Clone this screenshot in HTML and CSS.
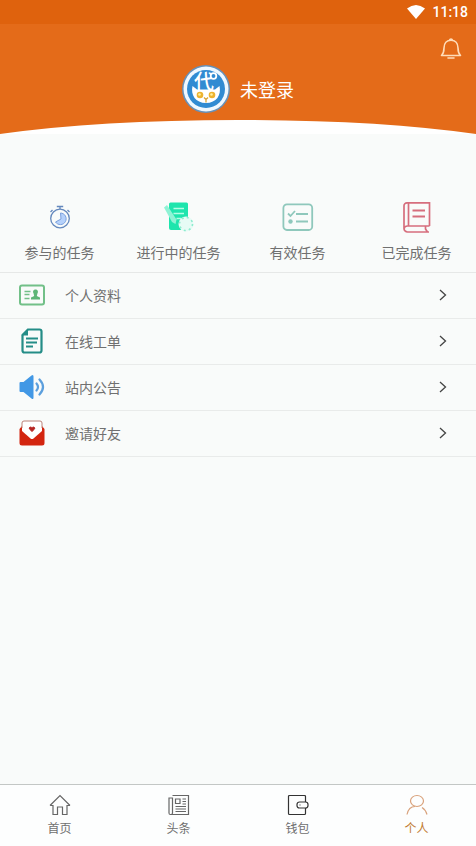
FILE: index.html
```html
<!DOCTYPE html>
<html lang="zh-CN">
<head>
<meta charset="utf-8">
<meta name="viewport" content="width=device-width, initial-scale=1">
<title>个人</title>
<link rel="stylesheet" href="styles.css">
</head>
<body>
<div class="status">
  <svg class="wifi" viewBox="0 0 18 14" aria-hidden="true"><path d="M0 3.5Q9-3.5 18 3.5L9 14Z" fill="#fff"/></svg>
  <span>11:18</span>
</div>
<header class="header">
  <button class="bell" type="button" aria-label="消息">
    <svg viewBox="0 0 24 24" fill="none" stroke="#ffdcb8" stroke-width="1.600" stroke-linejoin="round" stroke-linecap="round"><path d="M10.400 3.200a1.700 1.700 0 0 1 3.200 0M2.500 18.500h19M2.500 18.500C4.500 16.500 5 14.500 5 11c0-4.800 2.800-7.800 7-7.800s7 3 7 7.800c0 3.500.5 5.500 2.500 7.500M9 21h6"/></svg>
  </button>
  <a class="profile" href="#login">
    <svg class="avatar" viewBox="0 0 48 48" aria-hidden="true">
      <circle cx="24" cy="24" r="24" fill="#6791b8"/>
      <circle cx="24" cy="24" r="22.500" fill="#eff8ff"/>
      <circle cx="24" cy="24" r="19" fill="#318bd2"/>
      <path d="M10.500 21l4.500 3.500h18l4.500-3.500c2 9-3 17-13.500 17S8.500 30 10.500 21Z" fill="#fff"/>
      <text class="mark" x="22" y="24" text-anchor="middle">代</text>
      <circle cx="31.500" cy="11" r="2.800" fill="#318bd2" stroke="#fff" stroke-width="1.800"/>
      <circle cx="18" cy="30" r="3.300" fill="#edb32f"/><circle cx="30" cy="30" r="3.300" fill="#edb32f"/>
      <circle cx="17.500" cy="29.500" r="1.300" fill="#fff0a0"/><circle cx="29.500" cy="29.500" r="1.300" fill="#fff0a0"/>
      <path d="M22 32.500l2 2 2-2M24 34.500v3" fill="none" stroke="#dba536" stroke-width="1.300"/>
    </svg>
    <span>未登录</span>
  </a>
  <svg class="curve" viewBox="0 0 476 14" preserveAspectRatio="none" aria-hidden="true"><path d="M0 14Q100 0 238 0T476 14Z" fill="#fff"/></svg>
</header>
<main class="main">
  <nav class="stats" aria-label="任务">
    <a href="#joined">
      <svg viewBox="0 0 32 32" fill="none" stroke="#6488bd" stroke-width="1.300"><circle cx="16" cy="17.500" r="9.300"/><path d="M16 8V5.500M12.800 5.500h6.400"/><path d="M6.500 11l2-2M25.500 11l-2-2"/><path d="M16.500 12a5.800 5.800 0 1 1-5 9L17 18Z" fill="#b5d1fb" stroke="#7ba0dd" stroke-width="1"/></svg>
      <span>参与的任务</span>
    </a>
    <a href="#running">
      <svg viewBox="0 0 32 32"><path d="M6 3Q6 1.500 7.500 1.500H23.500Q25 1.500 25 3V29H8Q6 29 6 27Z" fill="#1ee5ad"/><path d="M1 6.500L4 4l9.500 14.500-1 4.500-3.500-2Z" fill="#8ff3d5"/><path d="M10.500 7.500h10.500M10.500 12.500h10.500M13.500 17.500h5" stroke="#b4fde5" stroke-width="1.500"/><circle cx="23" cy="23" r="7.500" fill="#e6fbf5"/><circle cx="23" cy="23" r="6.500" fill="none" stroke="#8eeccf" stroke-width="1.600" stroke-dasharray="2 3.100"/></svg>
      <span>进行中的任务</span>
    </a>
    <a href="#valid">
      <svg viewBox="0 0 32 32" fill="none" stroke="#8fc8bc" stroke-width="1.800"><rect x="1.400" y="3.400" width="28.800" height="25.600" rx="3.500"/><path d="M6 12.500l2.500 2.500 4.500-5M14 13h12M14 20.500h12"/><circle cx="8.500" cy="20.500" r="2.200" fill="#8fc8bc" stroke="none"/></svg>
      <span>有效任务</span>
    </a>
    <a href="#done">
      <svg viewBox="0 0 32 32" fill="none" stroke="#d66e7d" stroke-width="1.700"><path d="M28.500 25V1.800H6A3 3 0 0 0 3 5v22.500a3.500 3.500 0 0 0 3.500 3.500h21.500M28.500 25H6.500a3.500 3.500 0 0 0-3.500 3M7.500 2v23M24.500 25v3l2 3"/><path d="M11.500 9.500h12.500M11.500 15.500h12.500" stroke-width="1.900"/></svg>
      <span>已完成任务</span>
    </a>
  </nav>
  <ul class="menu">
    <li><a href="#profile">
      <svg class="icon" viewBox="0 0 26 26"><rect x="1" y="3.500" width="24" height="19" rx="2" fill="none" stroke="#72c088" stroke-width="2"/><path d="M5.500 9.500h6M5.500 12.500h5M5.500 16.500h5" stroke="#72c088" stroke-width="1.600"/><path d="M16.500 7.500a2.300 2.300 0 0 1 2 3.700L17.800 14l3.200 1.500v2h-9v-2l3.200-1.500-.7-2.800A2.300 2.300 0 0 1 16.500 7.500Z" fill="#5fb677"/></svg>
      <span>个人资料</span>
      <svg class="arrow" viewBox="0 0 12 12"><path d="M3 1l5.500 5L3 11"/></svg></a></li>
    <li><a href="#tickets">
      <svg class="icon" viewBox="0 0 26 26"><path d="M9 1.500h11.500a2 2 0 0 1 2 2v19a2 2 0 0 1-2 2h-15a2 2 0 0 1-2-2V7Z" fill="none" stroke="#248d87" stroke-width="2.200" stroke-linejoin="round"/><path d="M2.500 7.500L9 .5v7Z" fill="#248d87"/><path d="M7 10.500h12M7 14.500h11M7 18.500h7" stroke="#248d87" stroke-width="1.900"/></svg>
      <span>在线工单</span>
      <svg class="arrow" viewBox="0 0 12 12"><path d="M3 1l5.500 5L3 11"/></svg></a></li>
    <li><a href="#notices">
      <svg class="icon" viewBox="0 0 26 26"><path d="M.5 9q0-1 1-1h3L12.500 1.500Q14.500 0 14.500 2.500v21q0 2.500-2 1L4.500 18h-3q-1 0-1-1Z" fill="#4298e5"/><path d="M17.500 9.500q3 3.500 0 7M20.500 5.500q7 7.500 0 15" fill="none" stroke="#5c9fdd" stroke-width="2.200" stroke-linecap="round"/></svg>
      <span>站内公告</span>
      <svg class="arrow" viewBox="0 0 12 12"><path d="M3 1l5.500 5L3 11"/></svg></a></li>
    <li><a href="#invite">
      <svg class="icon" viewBox="0 0 26 26"><path d="M.5 9L3 6l10 6 10-6 2.500 3v14q0 2.500-2.500 2.500H3Q.5 25.500.5 23Z" fill="#d3250f"/><path d="M3 11V3Q3 1 5 1h16q2 0 2 2v8l-8.500 7.500q-1.500 1-3 0Z" fill="#fff"/><path d="M3 8V3Q3 1 5 1h16q2 0 2 2v5" fill="none" stroke="#bb8278"/><path d="M13 11.500l-2.500-2.400c-1-2 1.500-2.700 2.500-1.200 1-1.500 3.500-.8 2.500 1.200Z" fill="#b72522" stroke="#b72522"/></svg>
      <span>邀请好友</span>
      <svg class="arrow" viewBox="0 0 12 12"><path d="M3 1l5.500 5L3 11"/></svg></a></li>
  </ul>
</main>
<nav class="tabs" aria-label="主导航">
  <a href="#home">
    <svg viewBox="0 0 22 22"><path d="M1 11.500L11 1.500l10 10M1 11.500h3V20.500h4.500V13h5v7.500H18v-9h3"/></svg>
    <span>首页</span></a>
  <a href="#news">
    <svg viewBox="0 0 22 22"><path d="M4.500 1.500h16v19h-18q-1.500 0-1.500-1.500V4h3.500v15q0 1.500-1.500 1.500"/><path d="M7.500 5h4.500v4.500H7.500ZM14.500 5h3.500M14.500 7.500h3.500M14.500 10h3.500M7.500 12.500h10.500M7.500 15h10.500M7.500 17.500h10.500"/></svg>
    <span>头条</span></a>
  <a href="#wallet">
    <svg class="dark" viewBox="0 0 22 22"><path d="M18.500 8V2.500q0-1-1-1H2.500q-1 0-1 1v17q0 1 1 1h15q1 0 1-1V14"/><rect x="10" y="8" width="11" height="6" rx="2.500"/><path d="M12.500 11h1"/></svg>
    <span>钱包</span></a>
  <a class="active" href="#me" aria-current="page">
    <svg viewBox="0 0 22 22"><ellipse cx="11" cy="7" rx="6.500" ry="5.500"/><path d="M1 20.500c1-5 4-8 8-8M16 13.500c2.500 1.500 4 3.500 5 7"/></svg>
    <span>个人</span></a>
</nav>
</body>
</html>
```

FILE: styles.css
```css
* {
  box-sizing: border-box;
}

body {
  display: flex;
  flex-direction: column;
  min-height: 100vh;
  margin: 0;
  background: #f9fbfa;
  color: #707070;
  font-family: "Noto Sans CJK SC", sans-serif;
  font-size: 14px;
  line-height: 18px;
}

a {
  color: inherit;
  text-decoration: none;
}

svg {
  display: block;
}

.status {
  display: flex;
  align-items: center;
  justify-content: flex-end;
  gap: 7px;
  height: 24px;
  padding: 0 8px;
  background: #df620d;
  color: #fff;
  font-family: Roboto, sans-serif;
  font-size: 14px;
  font-weight: 500;
}

.wifi {
  width: 18px;
  height: 14px;
}

.header {
  display: flex;
  flex-direction: column;
  align-items: center;
  padding-top: 13px;
  background: #e46b19;
}

.bell {
  align-self: flex-end;
  width: 24px;
  height: 24px;
  margin: 0 13px 4px;
  padding: 0;
  border: 0;
  background: none;
}

.profile {
  display: flex;
  align-items: center;
  gap: 10px;
  margin-bottom: 7px;
  color: #fff;
  font-size: 18px;
}

.avatar {
  width: 48px;
  height: 48px;
}

.mark {
  fill: #fff;
  font-size: 20px;
  font-weight: 500;
}

.curve {
  width: 100%;
  height: 14px;
}

.main {
  flex: 1;
}

.stats {
  display: grid;
  grid-template-columns: repeat(4, 1fr);
  padding: 67px 0 11px;
  border-bottom: 1px solid #e6e8e7;
}

.stats a {
  display: flex;
  flex-direction: column;
  align-items: center;
  gap: 10px;
}

.stats svg {
  width: 32px;
  height: 32px;
}

.menu {
  margin: 0;
  padding: 0;
  list-style: none;
}

.menu a {
  display: flex;
  align-items: center;
  height: 46px;
  padding: 0 27px 1px 19px;
  border-bottom: 1px solid #e9ebea;
}

.icon {
  width: 26px;
  height: 26px;
  margin-right: 20px;
}

.arrow {
  width: 12px;
  height: 12px;
  margin-left: auto;
  fill: none;
  stroke: #444;
  stroke-width: 1.3;
}

.tabs {
  display: grid;
  grid-template-columns: repeat(4, 1fr);
  padding: 9px 0 9px;
  border-top: 1px solid #c3c7c5;
  background: #fdfefe;
  font-size: 12px;
}

.tabs a {
  display: flex;
  flex-direction: column;
  align-items: center;
  gap: 3px;
}

.tabs svg {
  width: 22px;
  height: 22px;
  fill: none;
  stroke: #666;
  stroke-width: 1.2;
}

.tabs .dark {
  stroke: #333;
}

.tabs .active {
  color: #c17c31;
}

.tabs .active svg {
  stroke: #d9a27c;
}
```
